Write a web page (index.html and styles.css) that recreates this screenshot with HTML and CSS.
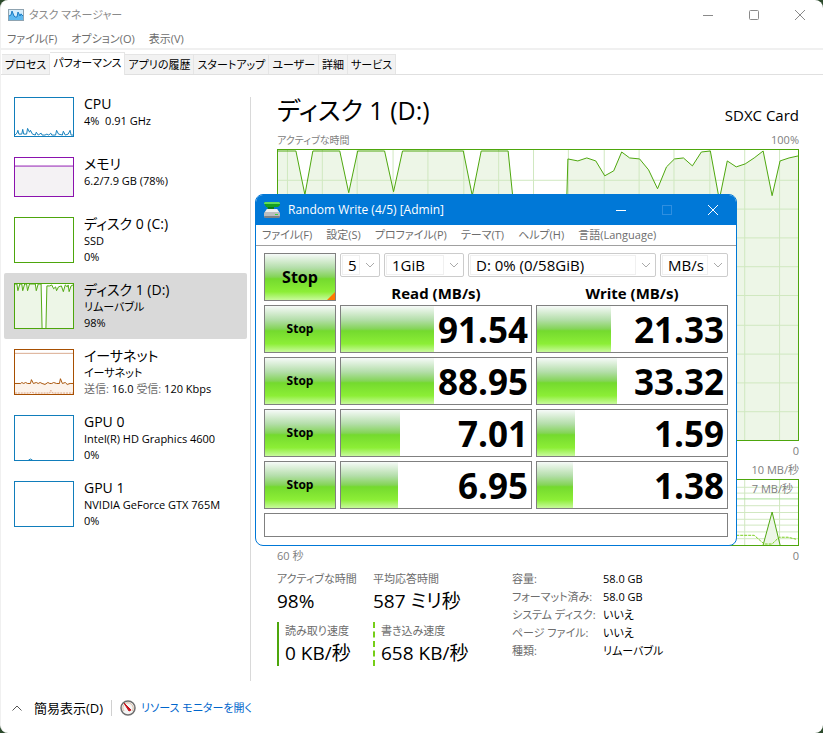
FILE: index.html
```html
<!DOCTYPE html>
<html lang="ja">
<head>
	<meta charset="utf-8">
	<meta name="viewport" content="width=device-width, initial-scale=1">
	<title>タスク マネージャー</title>
	<link rel="stylesheet" href="styles.css">
</head>
<body>
	<div class="window">
		<header class="titlebar">
			<svg class="app-icon" viewBox="0 0 16 12">
				<rect x="0.5" y="0.5" width="15" height="11" fill="#d4ecfb" stroke="#8fa3b0"/>
				<path d="M1 11V7L3 6L4 2L6 6L7 8L9 8L10 3L12 6L13 4L15 7V11Z" fill="#5cb8f0"/>
				<path d="M1 7L3 6L4 2L6 7L7 8L9 8L10 3L12 7L13 5L15 7" fill="none" stroke="#1a7cc4"/>
			</svg>
			<h1>タスク マネージャー</h1>
			<div class="controls">
				<button type="button" aria-label="最小化"><svg viewBox="0 0 12 12"><path d="M1 6.5H11"/></svg></button>
				<button type="button" aria-label="最大化"><svg viewBox="0 0 12 12"><rect x="1.5" y="1.5" width="9" height="9" rx="1"/></svg></button>
				<button type="button" aria-label="閉じる"><svg viewBox="0 0 12 12"><path d="M1 1L11 11M11 1L1 11"/></svg></button>
			</div>
		</header>

		<nav class="menu">
			<button type="button">ファイル(F)</button>
			<button type="button">オプション(O)</button>
			<button type="button">表示(V)</button>
		</nav>

		<div class="tabs" role="tablist">
			<button type="button" role="tab">プロセス</button>
			<button type="button" role="tab" class="active" aria-selected="true">パフォーマンス</button>
			<button type="button" role="tab">アプリの履歴</button>
			<button type="button" role="tab">スタートアップ</button>
			<button type="button" role="tab">ユーザー</button>
			<button type="button" role="tab">詳細</button>
			<button type="button" role="tab">サービス</button>
		</div>

		<div class="content">
			<ul class="sidebar">
				<li class="item">
					<svg class="thumb cpu short" viewBox="0 0 60 40" preserveAspectRatio="none">
						<path d="M0 39L2 37L3 34L4 38L7 38L8 33L9 38L12 38L13 32L15 36L16 34L18 38L21 39L22 36L24 39L27 37L28 39L31 39L33 38L35 39L37 37L38 39L42 39L43 34L45 38L49 39L50 35L52 39L55 38L57 34L58 39H60"/>
					</svg>
					<div class="info"><h2>CPU</h2><p>4%&nbsp; 0.91 GHz</p></div>
				</li>
				<li class="item">
					<svg class="thumb memory short" viewBox="0 0 60 40" preserveAspectRatio="none">
						<rect x="0" y="9" width="60" height="31" fill="#f4f2f4" stroke="none"/>
						<path d="M0 8.5H60"/>
					</svg>
					<div class="info"><h2>メモリ</h2><p>6.2/7.9 GB (78%)</p></div>
				</li>
				<li class="item">
					<svg class="thumb disk" viewBox="0 0 60 46"></svg>
					<div class="info"><h2>ディスク 0 (C:)</h2><p>SSD</p><p>0%</p></div>
				</li>
				<li class="item selected">
					<svg class="thumb disk" viewBox="0 0 60 46" preserveAspectRatio="none">
						<path class="area" stroke="none" d="M0 0L2 0L3 7L5 0L7 0L8 7L10 0L12 0L13 7L15 0L21 0L22 7L24 0L27 0L28 46H32L33 2L36 2L38 1L40 5L42 3L43 7L45 3L48 2L50 8L52 1L54 3L55 1L56 8L58 2L60 1V46H0Z"/>
						<path d="M0 0L2 0L3 7L5 0L7 0L8 7L10 0L12 0L13 7L15 0L21 0L22 7L24 0L27 0L28 46M32 46L33 2L36 2L38 1L40 5L42 3L43 7L45 3L48 2L50 8L52 1L54 3L55 1L56 8L58 2L60 1"/>
					</svg>
					<div class="info"><h2>ディスク 1 (D:)</h2><p>リムーバブル</p><p>98%</p></div>
				</li>
				<li class="item">
					<svg class="thumb ethernet" viewBox="0 0 60 46" preserveAspectRatio="none">
						<path fill="#fcf3eb" stroke="none" d="M0 35H60V46H0Z"/>
						<path stroke="#d9a98c" d="M0 3.5H60"/>
						<path d="M0 35L6 35L7 34L9 35L11 34L13 35L16 35L17 31L19 35L22 34L24 35L26 34L28 35L31 36L34 34L36 35L38 35L40 34L43 35L46 35L47 30L49 35L52 34L54 36L57 35L60 35"/>
						<path stroke="#dca080" stroke-dasharray="2 1" d="M0 45H15L17 44L20 45H36L37 42L39 45H60"/>
					</svg>
					<div class="info"><h2>イーサネット</h2><p>イーサネット</p><p><span>送信:</span> 16.0 <span>受信:</span> 120 Kbps</p></div>
				</li>
				<li class="item">
					<svg class="thumb cpu" viewBox="0 0 60 46" preserveAspectRatio="none"><path d="M14 46L16 45L18 46"/></svg>
					<div class="info"><h2>GPU 0</h2><p>Intel(R) HD Graphics 4600</p><p>0%</p></div>
				</li>
				<li class="item">
					<svg class="thumb cpu" viewBox="0 0 60 46"></svg>
					<div class="info"><h2>GPU 1</h2><p>NVIDIA GeForce GTX 765M</p><p>0%</p></div>
				</li>
			</ul>

			<main class="detail">
				<div class="heading"><h2>ディスク 1 (D:)</h2><span>SDXC Card</span></div>
				<div class="scale"><span class="caption">アクティブな時間</span><span>100%</span></div>
				<svg class="chart active-time" viewBox="0 0 522 292" preserveAspectRatio="none">
					<path class="area" d="M0 1L18 1L27 45L35 1L62 1L71 43L80 1L107 1L116 42L125 1L186 1L195 46L204 1L231 1L240 90L249 292H283L290 45L291 9L301 11L310 8L319 11L328 26L337 21L345 2L353 8L363 9L372 20L381 39L390 17L398 9L407 8L416 16L425 2L434 1L443 50L451 11L460 17L469 14L478 8L487 1L496 46L504 11L513 8L522 6V292H0Z"/>
					<path class="lines" d="M9.5 0V292M44.5 0V292M79.5 0V292M115.5 0V292M150.5 0V292M186.5 0V292M221.5 0V292M256.5 0V292M291.5 0V292M327.5 0V292M362.5 0V292M397.5 0V292M433.5 0V292M468.5 0V292M503.5 0V292M0 30.5H522M0 59.5H522M0 88.5H522M0 117.5H522M0 146.5H522M0 176.5H522M0 205.5H522M0 234.5H522M0 263.5H522"/>
					<path class="trace" d="M0 1L18 1L27 45L35 1L62 1L71 43L80 1L107 1L116 42L125 1L186 1L195 46L204 1L231 1L240 90L249 292H283L290 45L291 9L301 11L310 8L319 11L328 26L337 21L345 2L353 8L363 9L372 20L381 39L390 17L398 9L407 8L416 16L425 2L434 1L443 50L451 11L460 17L469 14L478 8L487 1L496 46L504 11L513 8L522 6"/>
				</svg>
				<div class="scale"><span></span><span>0</span></div>
				<div class="scale"><span class="caption">ディスクの転送速度</span><span>10 MB/秒</span></div>
				<div class="transfer">
					<svg class="chart" viewBox="0 0 522 67" preserveAspectRatio="none">
						<path class="lines" d="M9.5 0V67M44.5 0V67M79.5 0V67M115.5 0V67M150.5 0V67M186.5 0V67M221.5 0V67M256.5 0V67M291.5 0V67M327.5 0V67M362.5 0V67M397.5 0V67M433.5 0V67M468.5 0V67M503.5 0V67M0 7.5H522M0 13.5H522M0 26.5H522M0 33.5H522M0 40.5H522M0 46.5H522M0 53.5H522M0 60.5H522"/>
						<path class="limit" d="M0 19.5H522"/>
						<path class="area" d="M487 67L496 33L504 67Z"/>
						<path class="trace" d="M487 67L496 33L504 67"/>
						<path class="trace dashed" d="M440 57H478L488 66H496L503 59H512L520 61"/>
					</svg>
					<span class="limit-label">7 MB/秒</span>
				</div>
				<div class="scale"><span>60 秒</span><span>0</span></div>

				<div class="stats">
					<dl class="figures">
						<div><dt>アクティブな時間</dt><dd>98%</dd></div>
						<div><dt>平均応答時間</dt><dd>587 ミリ秒</dd></div>
						<div class="read"><dt>読み取り速度</dt><dd>0 KB/秒</dd></div>
						<div class="write"><dt>書き込み速度</dt><dd>658 KB/秒</dd></div>
					</dl>
					<dl class="props">
						<dt>容量:</dt><dd>58.0 GB</dd>
						<dt>フォーマット済み:</dt><dd>58.0 GB</dd>
						<dt>システム ディスク:</dt><dd>いいえ</dd>
						<dt>ページ ファイル:</dt><dd>いいえ</dd>
						<dt>種類:</dt><dd>リムーバブル</dd>
					</dl>
				</div>
			</main>
		</div>

		<footer class="footer">
			<button type="button">
				<svg class="caret" viewBox="0 0 10 6"><path d="M0.5 5.5L5 1L9.5 5.5"/></svg>
				簡易表示(D)
			</button>
			<a href="#resmon">
				<svg class="gauge" viewBox="0 0 16 16">
					<circle cx="8" cy="8" r="7" fill="#f4f4f4" stroke="#6e6e6e" stroke-width="1.5"/>
					<path d="M4 11A5 5 0 1 1 12 11" fill="none" stroke="#d9b9a0"/>
					<path d="M4 3L11 10L9 11Z" fill="#c8101a" stroke="#c8101a"/>
				</svg>
				リソース モニターを開く
			</a>
		</footer>
	</div>

	<section class="bench" aria-label="Random Write">
		<header class="bench-title">
			<svg class="bench-icon" viewBox="0 0 16 16">
				<path d="M0 1L1 0H15L16 1V3L14 5H10V7H4L3 5H2Z" fill="#16a022"/>
				<path d="M1 0H15L16 1V2H0V1Z" fill="#5fdc5c"/>
				<path d="M4 5H10V7H4Z" fill="#0b7a16"/>
				<path d="M3 7H13L16 11V14L15 16H1L0 14V11Z" fill="#b9bdc0"/>
				<path d="M3 7H13L15 10H1Z" fill="#eceeef"/>
				<path d="M0 14H16L15 16H1Z" fill="#7c8286"/>
				<path d="M11 12H14V13H11Z" fill="#3bd63b"/>
			</svg>
			<h2>Random Write (4/5) [Admin]</h2>
			<div class="controls">
				<button type="button" aria-label="最小化"><svg viewBox="0 0 12 12"><path d="M1 6.5H11"/></svg></button>
				<button type="button" aria-label="最大化" disabled><svg viewBox="0 0 12 12"><rect x="1.5" y="1.5" width="9" height="9"/></svg></button>
				<button type="button" aria-label="閉じる"><svg viewBox="0 0 12 12"><path d="M1 1L11 11M11 1L1 11"/></svg></button>
			</div>
		</header>
		<nav class="menu">
			<button type="button">ファイル(F)</button>
			<button type="button">設定(S)</button>
			<button type="button">プロファイル(P)</button>
			<button type="button">テーマ(T)</button>
			<button type="button">ヘルプ(H)</button>
			<button type="button">言語(Language)</button>
		</nav>
		<div class="bench-body">
			<button type="button" class="run all">Stop</button>
			<div class="options">
				<div class="combos">
					<label class="combo"><select aria-label="テスト回数"><option>5</option></select><svg viewBox="0 0 10 6"><path d="M1 1L5 5L9 1"/></svg></label>
					<label class="combo"><select aria-label="テストサイズ"><option>1GiB</option></select><svg viewBox="0 0 10 6"><path d="M1 1L5 5L9 1"/></svg></label>
					<label class="combo"><select aria-label="ドライブ"><option>D: 0% (0/58GiB)</option></select><svg viewBox="0 0 10 6"><path d="M1 1L5 5L9 1"/></svg></label>
					<label class="combo"><select aria-label="単位"><option>MB/s</option></select><svg viewBox="0 0 10 6"><path d="M1 1L5 5L9 1"/></svg></label>
				</div>
				<div class="columns"><b>Read (MB/s)</b><b>Write (MB/s)</b></div>
			</div>

			<button type="button" class="run">Stop</button>
			<div class="meter"><i style="width: 49%"></i><b>91.54</b></div>
			<div class="meter"><i style="width: 39%"></i><b>21.33</b></div>

			<button type="button" class="run">Stop</button>
			<div class="meter"><i style="width: 49%"></i><b>88.95</b></div>
			<div class="meter"><i style="width: 42%"></i><b>33.32</b></div>

			<button type="button" class="run">Stop</button>
			<div class="meter"><i style="width: 31%"></i><b>7.01</b></div>
			<div class="meter"><i style="width: 20%"></i><b>1.59</b></div>

			<button type="button" class="run">Stop</button>
			<div class="meter"><i style="width: 30%"></i><b>6.95</b></div>
			<div class="meter"><i style="width: 19%"></i><b>1.38</b></div>

			<input class="comment" type="text" aria-label="コメント">
		</div>
	</section>
</body>
</html>
```
FILE: styles.css
```css
* {
	box-sizing: border-box;
}

body {
	margin: 0;
	background-color: #2c4a2c;
	font-family: 'Open Sans', 'Noto Sans CJK JP', sans-serif;
	font-size: 11px;
	line-height: 16px;
	font-feature-settings: 'palt';
	color: #000;
}

h1, h2, p, dl, dd, ul {
	margin: 0;
	padding: 0;
	font-weight: normal;
}

button, select, input {
	margin: 0;
	padding: 0;
	border: 0;
	background: none;
	font: inherit;
	font-feature-settings: inherit;
	color: inherit;
}

/* Task manager window */

.window {
	display: flex;
	flex-direction: column;
	min-height: 100vh;
	background-color: #fff;
	border-left: 1px solid #f0f0f0;
	border-radius: 8px;
}

.titlebar {
	display: flex;
	align-items: center;
	height: 29px;
	padding-left: 7px;
	color: #8a8a8a;
}

.titlebar h1 {
	margin-left: 5px;
	font-size: 11px;
}

.app-icon {
	width: 16px;
	height: 12px;
}

.controls {
	display: flex;
	margin-left: auto;
}

.controls button {
	display: flex;
	align-items: center;
	justify-content: center;
	width: 46px;
	height: 28px;
}

.controls svg {
	width: 12px;
	height: 12px;
	fill: none;
	stroke: #8a8a8a;
}

.menu {
	display: flex;
	gap: 14px;
	height: 21px;
	padding-left: 6px;
	border-bottom: 2px solid #f0f0f0;
	color: #6d6d6d;
}

.tabs {
	display: flex;
	align-items: flex-end;
	height: 25px;
	padding-left: 1px;
	border-bottom: 1px solid #e0e0e0;
}

.tabs button {
	height: 20px;
	padding: 0 3px;
	background-color: #f2f2f2;
	border: 1px solid #e5e5e5;
	border-width: 1px 1px 0 0;
}

.tabs .active {
	height: 23px;
	margin-bottom: -1px;
	padding-bottom: 3px;
	background-color: #fff;
}

.content {
	display: flex;
	flex: 1;
}

.sidebar {
	width: 250px;
	margin: 22px 0 2px;
	padding: 0 3px;
	border-right: 1px solid #d9d9d9;
	list-style: none;
}

.item {
	display: flex;
	gap: 10px;
	padding: 8px 10px;
}

.item:first-child {
	margin-top: -10px;
}

.item.selected {
	background-color: #d9d9d9;
	border-radius: 2px;
}

.info h2 {
	font-size: 14px;
	line-height: 18px;
}

.info span {
	color: #6d6d6d;
}

.thumb {
	flex: none;
	width: 60px;
	height: 46px;
	margin: 2px 0;
	background-color: #fff;
	border: 1px solid;
	fill: none;
	stroke: currentColor;
}

.thumb.short {
	height: 40px;
}

.cpu { color: #117dbb; }
.memory { color: #8b12ae; }
.disk { color: #4da60c; }
.ethernet { color: #a74f01; }

.detail {
	flex: 1;
	min-width: 0;
	padding: 15px 24px 0 26px;
}

.heading {
	display: flex;
	justify-content: space-between;
	height: 40px;
	font-size: 15px;
	line-height: 50px;
}

.heading h2 {
	font-size: 25px;
	line-height: 40px;
}

.scale {
	display: flex;
	justify-content: space-between;
	height: 19px;
	line-height: 20px;
	color: #808080;
}

.caption {
	font-size: 10px;
}

.chart {
	display: block;
	width: 100%;
	height: 67px;
	border: 1px solid #4da60c;
	fill: none;
}

.active-time {
	height: 292px;
}

.area {
	fill: #edf6e7;
}

.lines {
	stroke: #d0e8c0;
}

.trace {
	stroke: #4da60c;
}

.dashed {
	stroke: #76ce18;
	stroke-dasharray: 3 1;
}

.limit {
	stroke: #a4de94;
}

.transfer {
	position: relative;
}

.limit-label {
	position: absolute;
	top: 2px;
	right: 6px;
	color: #808080;
}

.stats {
	display: flex;
	gap: 31px;
	padding-top: 5px;
}

.figures {
	display: grid;
	grid-template-columns: 88px 108px;
	gap: 8px;
}

.figures dt {
	line-height: 18px;
	color: #6d6d6d;
	white-space: nowrap;
}

.figures dd {
	font-size: 19px;
	line-height: 26px;
	white-space: nowrap;
}

.figures .read, .figures .write {
	padding-left: 6px;
	border-left: 2px solid #4da60c;
}

.figures .write {
	border-left: 2px dashed #76ce18;
}

.props {
	display: grid;
	grid-template-columns: 91px 1fr;
	grid-auto-rows: 18px;
	line-height: 18px;
}

.props dt {
	color: #6d6d6d;
	white-space: nowrap;
}

.footer {
	display: flex;
	align-items: center;
	height: 50px;
	padding-left: 11px;
}

.footer button, .footer a {
	display: flex;
	align-items: center;
}

.footer button {
	gap: 12px;
	padding-right: 8px;
	border-right: 1px solid #d0d0d0;
	font-size: 13px;
}

.footer a {
	gap: 5px;
	padding-left: 8px;
	color: #0066cc;
	text-decoration: none;
}

.caret {
	width: 10px;
	height: 6px;
	fill: none;
	stroke: #555;
}

.gauge {
	width: 16px;
	height: 16px;
}

/* Benchmark window floating above */

.bench {
	position: absolute;
	top: 194px;
	left: 255px;
	width: 482px;
	overflow: hidden;
	background-color: #fff;
	border: 1px solid #0078d7;
	border-radius: 8px;
}

.bench-title {
	display: flex;
	align-items: center;
	height: 30px;
	padding-left: 8px;
	background-color: #0078d7;
	color: #fff;
}

.bench-title h2 {
	margin-left: 8px;
	font-size: 12px;
}

.bench-title .controls svg {
	stroke: #fff;
}

.bench-title .controls :disabled svg {
	stroke: #2f8fe0;
}

.bench-icon {
	width: 16px;
	height: 16px;
}

.bench .menu {
	align-items: center;
	border-bottom: 1px solid #a0a0a0;
}

.bench-body {
	display: grid;
	grid-template-columns: 72px 1fr 1fr;
	grid-template-rows: repeat(5, 48px) 24px;
	gap: 4px;
	padding: 7px 8px 8px;
}

.run, .meter i {
	background-image: linear-gradient(#f6faf8, #b4deaa 30%, #84d458 50%, #74da2e 54%, #8cee36 82%, #c8fa9c);
}

.run {
	position: relative;
	border: 1px solid #808080;
	font-size: 12px;
	font-weight: bold;
}

.run.all {
	font-size: 16px;
}

.run.all::after {
	content: '';
	position: absolute;
	right: 0;
	bottom: 0;
	border: 4px solid;
	border-color: transparent #ff7800 #ff7800 transparent;
}

.options {
	grid-column: span 2;
}

.combos {
	display: grid;
	grid-template-columns: 40px 80px 1fr 68px;
	gap: 4px;
}

.combo {
	display: flex;
	align-items: center;
	height: 24px;
	padding: 1px;
	border: 1px solid #ccc;
	border-radius: 2px;
}

.combo select {
	flex: 1;
	min-width: 0;
	height: 20px;
	padding-left: 5px;
	appearance: none;
	border: 1px solid #f0f0f0;
	font-size: 15px;
	line-height: 18px;
}

.combo svg {
	width: 10px;
	height: 6px;
	margin: 0 3px 0 5px;
	fill: none;
	stroke: #aaa;
}

.columns {
	display: grid;
	grid-template-columns: 1fr 1fr;
	gap: 4px;
	padding-top: 4px;
	font-size: 15px;
	line-height: 24px;
	text-align: center;
}

.meter {
	display: grid;
	grid-template-rows: 46px;
	border: 1px solid #808080;
}

.meter i, .meter b {
	grid-area: 1 / 1;
}

.meter b {
	padding-right: 3px;
	font-size: 35px;
	line-height: 48px;
	text-align: right;
}

.comment {
	grid-column: span 3;
	padding: 0 4px;
	border: 1px solid #808080;
}
```
